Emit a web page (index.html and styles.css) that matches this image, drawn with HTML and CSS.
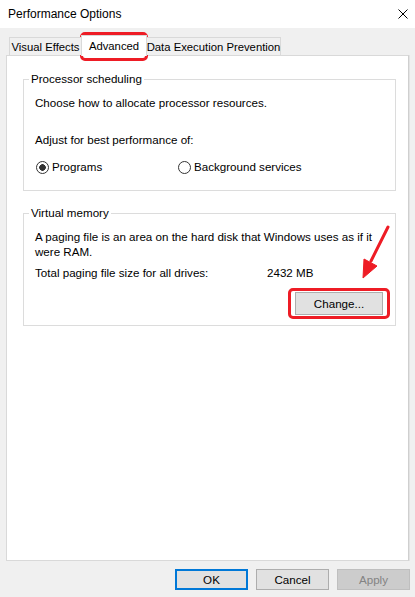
FILE: index.html
```html
<!DOCTYPE html>
<html>
<head>
<meta charset="utf-8">
<title>Performance Options</title>
<link rel="stylesheet" href="styles.css">
</head>
<body>
<div class="window">
  <header class="titlebar">
    <span class="title">Performance Options</span>
    <svg class="close" width="10" height="10" viewBox="0 0 10 10"><path d="M0.5 0.5L9.5 9.5M9.5 0.5L0.5 9.5" stroke="#000" stroke-width="1" fill="none"/></svg>
  </header>
  <div class="content">
    <nav class="tabs">
      <div class="tab tab-visual">Visual Effects</div>
      <div class="tab tab-adv active">Advanced</div>
      <div class="tab tab-dep">Data Execution Prevention</div>
    </nav>
    <section class="panel">
      <fieldset class="group">
        <legend>Processor scheduling</legend>
        <p class="line first">Choose how to allocate processor resources.</p>
        <p class="line gap-lg">Adjust for best performance of:</p>
        <div class="radios">
          <label class="radio radio-first"><span class="dot checked"></span>Programs</label>
          <label class="radio"><span class="dot"></span>Background services</label>
        </div>
      </fieldset>
      <fieldset class="group group-vm">
        <legend>Virtual memory</legend>
        <p class="para">A paging file is an area on the hard disk that Windows uses as if it<br>were RAM.</p>
        <div class="total"><span class="total-label">Total paging file size for all drives:</span><span>2432 MB</span></div>
        <div class="change-row"><button class="btn change">Change...</button></div>
      </fieldset>
    </section>
  </div>
  <footer class="footer">
    <button class="btn default">OK</button>
    <button class="btn">Cancel</button>
    <button class="btn disabled">Apply</button>
  </footer>
  <span class="mark mark-tab"></span>
  <span class="mark mark-btn"></span>
  <svg class="arrow" width="40" height="62" viewBox="0 0 40 62">
    <path d="M33 5L16 39" stroke="#ee1c25" stroke-width="3" stroke-linecap="round" fill="none"/>
    <path d="M8 56L22 44L9 37Z" fill="#ee1c25" stroke="#ee1c25" stroke-width="1" stroke-linejoin="round"/>
  </svg>
</div>
</body>
</html>
```
FILE: styles.css
```css
html, body {
  margin: 0;
  padding: 0;
}
body {
  background: #f0f0f0;
  font-family: "Liberation Sans", Arial, sans-serif;
  font-size: 11.6px;
  color: #000;
}
.window {
  position: relative;
  width: 415px;
  height: 597px;
  overflow: hidden;
  background: #f0f0f0;
}
.titlebar {
  height: 28px;
  background: #fff;
  display: flex;
  align-items: center;
  justify-content: space-between;
  padding: 0 7px 1px 8px;
  box-sizing: border-box;
}
.title {
  font-size: 12px;
  line-height: 16px;
}
.close {
  display: block;
}
.content {
  padding: 0 6px;
}
.tabs {
  display: flex;
  align-items: flex-end;
  height: 20px;
  margin-top: 7px;
  padding-left: 3px;
  position: relative;
  z-index: 1;
}
.tab {
  height: 18px;
  box-sizing: border-box;
  border: 1px solid #d9d9d9;
  border-bottom: none;
  background: #f0f0f0;
  display: flex;
  align-items: center;
  justify-content: center;
  white-space: nowrap;
  padding-top: 1px;
  font-size: 11.3px;
}
.tab-visual { width: 72px; border-right: none; }
.tab-adv { width: 66px; }
.tab-dep { width: 134px; border-left: none; }
.tab.active {
  height: 21px;
  background: #fff;
  margin-bottom: -1px;
  padding-top: 0;
  padding-bottom: 1px;
}
.panel {
  background: #fff;
  border: 1px solid #d9d9d9;
  border-right-color: #cfcfcf;
  box-shadow: 1px 0 0 #e3e3e3;
  height: 506px;
  box-sizing: border-box;
  padding: 15px 12px 0 16px;
}
.group {
  margin: 0;
  padding: 0 12px 15px 11px;
  border: 1px solid #dcdcdc;
  min-width: 0;
}
.group legend {
  padding: 0 2px;
  margin-left: -6px;
  line-height: 16px;
}
.group-vm {
  margin-top: 14px;
  padding-bottom: 10px;
}
.line {
  margin: 0;
  line-height: 16px;
  white-space: nowrap;
}
.line.first { margin-top: 8px; }
.line.gap-lg { margin-top: 21px; }
.radios {
  display: flex;
  margin-top: 11px;
  height: 16px;
}
.radio {
  display: flex;
  align-items: center;
  line-height: 16px;
  white-space: nowrap;
}
.radio-first { width: 142px; }
.dot {
  width: 13px;
  height: 13px;
  box-sizing: border-box;
  border: 1px solid #333;
  border-radius: 50%;
  background: #fff;
  margin: 0 3px 0 1px;
}
.dot.checked {
  background: radial-gradient(circle, #333 0 3px, #fff 3.6px);
}
.para {
  margin: 8px 0 0;
  line-height: 15px;
  white-space: nowrap;
}
.total {
  display: flex;
  margin-top: 6px;
  line-height: 16px;
  white-space: nowrap;
}
.total-label { width: 232px; }
.change-row {
  display: flex;
  justify-content: flex-end;
  margin-top: 11px;
}
.btn {
  font: inherit;
  color: #000;
  background: #e1e1e1;
  border: 1px solid #adadad;
  box-sizing: border-box;
  height: 21px;
  width: 73px;
  padding: 0;
  margin: 0;
  border-radius: 0;
}
.btn.change {
  width: 88px;
  height: 23px;
}
.btn.default {
  border: 2px solid #0078d7;
}
.btn.disabled {
  background: #cccccc;
  border-color: #bfbfbf;
  color: #838383;
}
.footer {
  display: flex;
  justify-content: flex-end;
  gap: 8px;
  margin-top: 8px;
  padding-right: 5px;
}
.mark {
  position: absolute;
  border: 3px solid #ee1c25;
  border-radius: 5px;
  box-sizing: border-box;
  pointer-events: none;
}
.mark-tab {
  left: 80px;
  top: 32px;
  width: 68px;
  height: 29px;
}
.mark-btn {
  left: 288px;
  top: 288px;
  width: 102px;
  height: 31px;
}
.arrow {
  position: absolute;
  left: 355px;
  top: 222px;
}
```
